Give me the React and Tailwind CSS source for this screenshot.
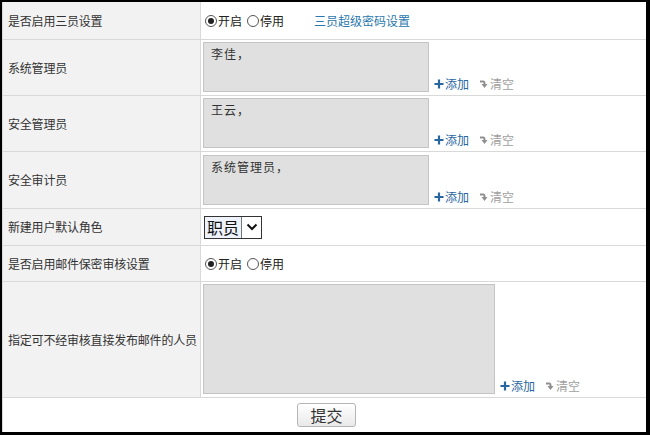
import React from 'react';

const font = { fontFamily: '"Noto Sans CJK SC", "Liberation Sans", sans-serif' };

function Radio({ checked }) {
  return (
    <span className="inline-flex w-[12px] h-[12px] rounded-full border border-[#555] bg-white items-center justify-center mr-[1px]">
      {checked && <span className="w-[6px] h-[6px] rounded-full bg-[#222]" />}
    </span>
  );
}

function RadioGroup() {
  return (
    <div className="flex items-center text-[12px] text-[#222]">
      <Radio checked />
      <span>开启</span>
      <span className="w-[5px]" />
      <Radio />
      <span>停用</span>
    </div>
  );
}

function Actions() {
  return (
    <div className="flex items-center text-[12px] leading-none pb-[2px]">
      <svg width="10" height="10" viewBox="0 0 10 10" className="mr-[1px]">
        <path d="M5 0.5 V9.5 M0.5 5 H9.5" stroke="#2766a0" strokeWidth="2.2" />
      </svg>
      <span className="text-[#2766a0]">添加</span>
      <span className="w-[10px]" />
      <svg width="10" height="10" viewBox="0 0 10 10" className="mr-[1px]">
        <path d="M1 2.5 H4.5 Q5.5 2.5 5.5 4 V5" stroke="#8f8f8f" strokeWidth="2" fill="none" />
        <path d="M2.5 5 H8.5 L5.5 9 Z" fill="#8f8f8f" />
      </svg>
      <span className="text-[#a0a0a0]">清空</span>
    </div>
  );
}

function Label({ children }) {
  return (
    <div className="w-[198px] shrink-0 bg-[#f2f2f2] border-r border-[#d9d9d9] flex items-center pl-[5px] text-[12px] text-[#333] whitespace-nowrap tracking-[-0.2px]">
      {children}
    </div>
  );
}

function Row({ h, label, children }) {
  return (
    <div className={`flex border-b border-[#d9d9d9] ${h}`}>
      <Label>{label}</Label>
      <div className="flex-1 flex">{children}</div>
    </div>
  );
}

function Picker({ text, w, h }) {
  return (
    <div className="flex items-end gap-[5px] pl-[2px] pt-[2px] pb-[3px]">
      <div className={`${w} ${h} bg-[#e0e0e0] border border-[#c4c4c4] text-[12px] text-[#333] px-[7px] pt-[2px] tracking-[1px]`}>
        {text}
      </div>
      <Actions />
    </div>
  );
}

export default function App() {
  return (
    <div style={font} className="w-[650px] h-[435px] bg-black pt-[2px] pl-[2px] pr-[4px] pb-[3px] overflow-hidden">
      <div className="bg-white h-full border-l border-[#d9d9d9] flex flex-col">
        <Row h="h-[38px]" label="是否启用三员设置">
          <div className="flex items-center pl-[4px]">
            <RadioGroup />
            <span className="ml-[30px] text-[12px] text-[#2a78ad]">三员超级密码设置</span>
          </div>
        </Row>
        <Row h="h-[56px]" label="系统管理员">
          <Picker text="李佳，" w="w-[226px]" h="h-[50px]" />
        </Row>
        <Row h="h-[56px]" label="安全管理员">
          <Picker text="王云，" w="w-[226px]" h="h-[50px]" />
        </Row>
        <Row h="h-[57px]" label="安全审计员">
          <Picker text="系统管理员，" w="w-[226px]" h="h-[50px]" />
        </Row>
        <Row h="h-[37px]" label="新建用户默认角色">
          <div className="flex items-center pl-[3px]">
            <div className="flex items-stretch h-[23px] border border-[#333] bg-white">
              <span className="text-[16px] leading-[21px] text-[#111] px-[2px] bg-[#eef2fb]">职员</span>
              <span className="w-[20px] border-l border-[#777] flex items-center justify-center bg-white">
                <svg width="12" height="8" viewBox="0 0 12 8">
                  <path d="M1.5 1.5 L6 6 L10.5 1.5" stroke="#111" strokeWidth="2" fill="none" />
                </svg>
              </span>
            </div>
          </div>
        </Row>
        <Row h="h-[36px]" label="是否启用邮件保密审核设置">
          <div className="flex items-center pl-[4px]">
            <RadioGroup />
          </div>
        </Row>
        <Row h="h-[116px]" label="指定可不经审核直接发布邮件的人员">
          <Picker text="" w="w-[292px]" h="h-[110px]" />
        </Row>
        <div className="flex-1 flex items-center justify-center">
          <button className="w-[59px] h-[24px] rounded-[3px] border border-[#b5b5b5] bg-gradient-to-b from-white to-[#e9e9e9] text-[16px] leading-none text-[#333] ml-[4px]">
            提交
          </button>
        </div>
      </div>
    </div>
  );
}
